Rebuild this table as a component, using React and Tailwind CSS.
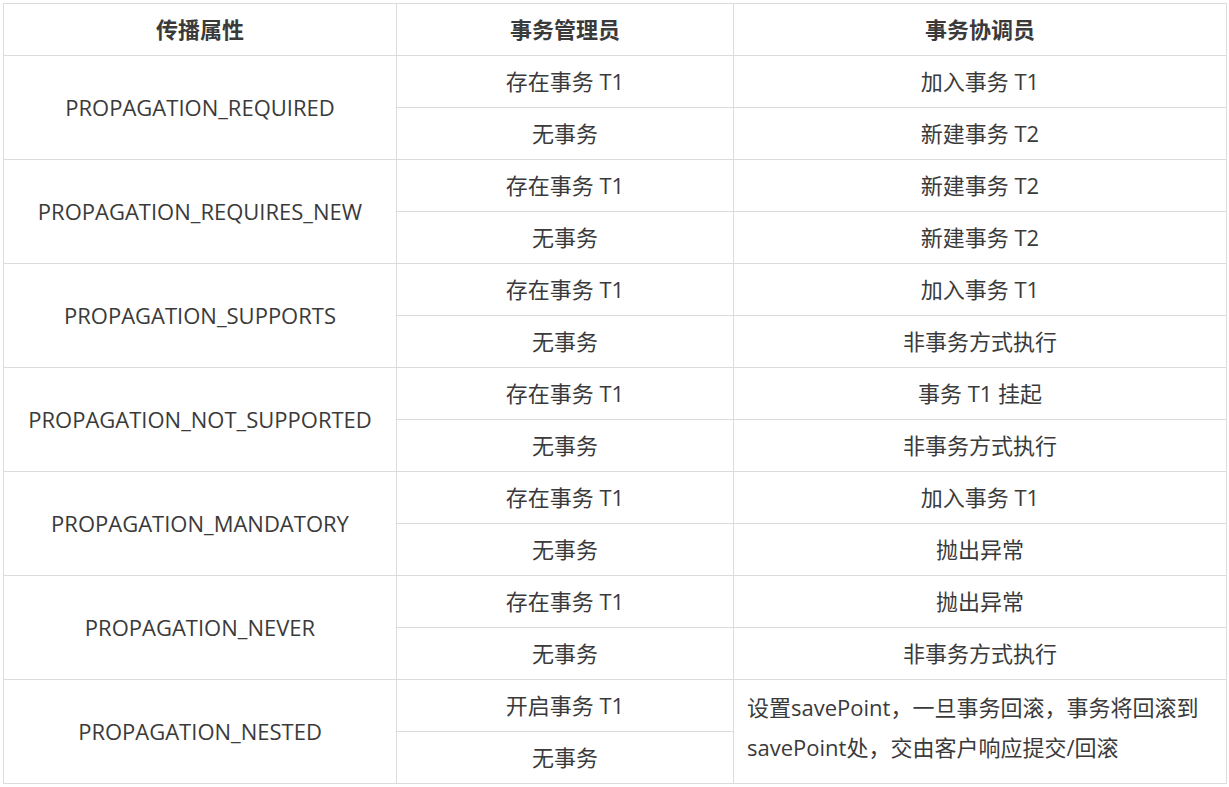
const rows = [
  { name: 'PROPAGATION_REQUIRED', a: ['存在事务 T1', '加入事务 T1'], b: ['无事务', '新建事务 T2'] },
  { name: 'PROPAGATION_REQUIRES_NEW', a: ['存在事务 T1', '新建事务 T2'], b: ['无事务', '新建事务 T2'] },
  { name: 'PROPAGATION_SUPPORTS', a: ['存在事务 T1', '加入事务 T1'], b: ['无事务', '非事务方式执行'] },
  { name: 'PROPAGATION_NOT_SUPPORTED', a: ['存在事务 T1', '事务 T1 挂起'], b: ['无事务', '非事务方式执行'] },
  { name: 'PROPAGATION_MANDATORY', a: ['存在事务 T1', '加入事务 T1'], b: ['无事务', '抛出异常'] },
  { name: 'PROPAGATION_NEVER', a: ['存在事务 T1', '抛出异常'], b: ['无事务', '非事务方式执行'] },
]

const cell = 'border border-[#dcdcdc] text-center align-middle'

export default function App() {
  return (
    <div
      className="p-[3px] bg-white text-[#3a3a3a] text-[22px]"
      style={{ fontFamily: '"Open Sans", "Noto Sans CJK SC", sans-serif' }}
    >
      <table className="w-[1223px] border-collapse table-fixed">
        <colgroup>
          <col className="w-[393px]" />
          <col className="w-[337px]" />
          <col className="w-[493px]" />
        </colgroup>
        <thead>
          <tr className="h-[52px]">
            <th className={`${cell} font-bold`}>传播属性</th>
            <th className={`${cell} font-bold`}>事务管理员</th>
            <th className={`${cell} font-bold`}>事务协调员</th>
          </tr>
        </thead>
        <tbody>
          {rows.map((r) => [
            <tr key={r.name + '1'} className="h-[52px]">
              <td rowSpan={2} className={cell}>{r.name}</td>
              <td className={cell}>{r.a[0]}</td>
              <td className={cell}>{r.a[1]}</td>
            </tr>,
            <tr key={r.name + '2'} className="h-[52px]">
              <td className={cell}>{r.b[0]}</td>
              <td className={cell}>{r.b[1]}</td>
            </tr>,
          ])}
          <tr className="h-[52px]">
            <td rowSpan={2} className={cell}>PROPAGATION_NESTED</td>
            <td className={cell}>开启事务 T1</td>
            <td rowSpan={2} className={`${cell} text-left px-[13px] pb-[10px] leading-[40px]`}>
              设置savePoint，一旦事务回滚，事务将回滚到savePoint处，交由客户响应提交/回滚
            </td>
          </tr>
          <tr className="h-[52px]">
            <td className={cell}>无事务</td>
          </tr>
        </tbody>
      </table>
    </div>
  )
}
